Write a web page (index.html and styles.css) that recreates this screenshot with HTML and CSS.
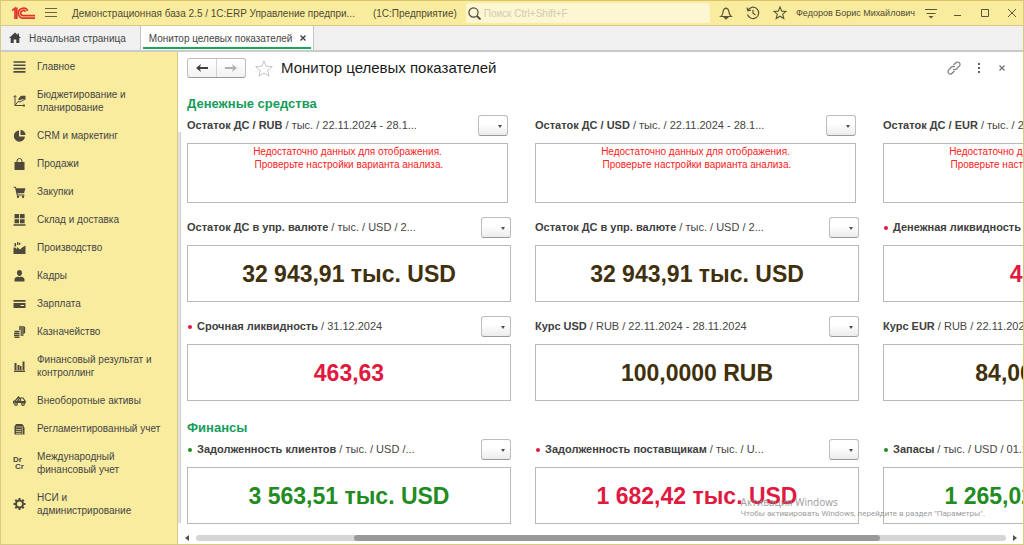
FILE: index.html
```html
<!DOCTYPE html>
<html lang="ru">
<head>
<meta charset="utf-8">
<title>Монитор целевых показателей</title>
<link rel="stylesheet" href="styles.css">
</head>
<body>
<div class="window">
  <header class="titlebar">
    <svg class="logo" viewBox="0 0 24 14" fill="none" stroke="#e0342b" stroke-width="1.700"><path d="M1 4.700 4 2.200V13M5.800 1.500V13"/><path d="M16.800 4.800A5 5 0 1 0 12.500 12.200H24"/><path d="M14.500 5.800A2.600 2.600 0 1 0 12.500 9.700H24"/></svg>
    <button class="icon-btn menu-btn" aria-label="Меню"><svg width="12" height="12" viewBox="0 0 12 12" stroke="#6b6443"><path d="M0 1.500h12M0 5.500h12M0 9.500h12"/></svg></button>
    <span class="app-title">Демонстрационная база 2.5 / 1С:ERP Управление предпри...</span>
    <span class="app-kind">(1С:Предприятие)</span>
    <label class="search">
      <svg width="13" height="13" viewBox="0 0 13 13" fill="none" stroke="#4d4935" stroke-width="1.200"><circle cx="5.500" cy="5.500" r="4.600"/><path d="m9 9 3.500 3.500" stroke-width="1.800"/></svg>
      <input type="search" placeholder="Поиск Ctrl+Shift+F" aria-label="Поиск">
    </label>
    <div class="tools">
      <button class="icon-btn" aria-label="Уведомления"><svg width="14" height="14" viewBox="0 0 14 14" fill="none" stroke="#5a543a" stroke-width="1.200"><path d="M7 1.200v1M1.800 10.500h10.400c-1.500-1-1.900-2-2.200-4.300C9.700 3.500 8.700 2.300 7 2.300S4.300 3.500 4 6.200C3.700 8.500 3.300 9.500 1.800 10.500z"/><path d="M5.500 11.500h3L7 13z" fill="#5a543a"/></svg></button>
      <button class="icon-btn" aria-label="История"><svg width="14" height="14" viewBox="0 0 14 14" fill="none" stroke="#5a543a" stroke-width="1.200"><path d="M1.800 4.500A5.700 5.700 0 1 1 1.500 8.500M1 1.500l.8 3.300L5 4.200M7 3.800v3.500l2.500 1.800"/></svg></button>
      <button class="icon-btn" aria-label="Избранное"><svg width="14" height="14" viewBox="0 0 14 14" fill="none" stroke="#5a543a" stroke-width="1.100"><path d="m7 1 1.700 4.100 4.400.3-3.400 2.800 1.100 4.300L7 10.200l-3.800 2.300 1.100-4.300L.9 5.400l4.400-.3z"/></svg></button>
      <a class="user" href="#">Федоров Борис Михайлович</a>
      <button class="icon-btn" aria-label="Настройки панели"><svg width="12" height="12" viewBox="0 0 12 12" stroke="#5a543a"><path d="M0 2.500h12M1.500 6.500h9"/><path d="M3.500 9h5L6 11.500z" fill="#5a543a" stroke="none"/></svg></button>
    </div>
    <div class="win-controls">
      <button class="icon-btn" aria-label="Свернуть"><svg width="8" height="8" viewBox="0 0 8 8" stroke="#5a543a"><path d="M0 6.500h7"/></svg></button>
      <button class="icon-btn" aria-label="Развернуть"><svg width="8" height="8" viewBox="0 0 8 8" fill="none" stroke="#5a543a"><path d="M.5.5h7v7h-7z"/></svg></button>
      <button class="icon-btn" aria-label="Закрыть"><svg width="8" height="8" viewBox="0 0 8 8" stroke="#5a543a"><path d="m0 0 8 8M8 0 0 8"/></svg></button>
    </div>
  </header>

  <nav class="tabs" aria-label="Открытые окна">
    <a class="tab" href="#"><svg width="12" height="12" viewBox="0 0 12 12" fill="#404040"><path d="M6 .5 0 6h1.700v5h3V7.500h2.600V11h3V6H12L10 4.200V1.500H8.600v1.400z"/></svg>Начальная страница</a>
    <div class="tab tab-active"><a href="#">Монитор целевых показателей</a><button class="icon-btn" aria-label="Закрыть вкладку"><svg width="6" height="6" viewBox="0 0 6 6" stroke="#404040" stroke-width="1.400"><path d="m.5.5 5 5M5.500.5l-5 5"/></svg></button></div>
  </nav>

  <div class="body">
    <nav class="sidebar" aria-label="Разделы">
      <a href="#"><svg viewBox="0 0 12 12" stroke="#4d4a3c" stroke-width="1.600"><path d="M0 1h12M0 4.300h12M0 7.600h12M0 10.900h12"/></svg>Главное</a>
      <a href="#"><svg viewBox="0 0 12 12" fill="none" stroke="#4d4a3c"><path d="M1.500 1v9.500H11M0 2.200 1.500.5 3 2.200M9.800 9l1.700 1.500L9.800 12M1.500 10.500l3-4 2 .5L12 4"/><path d="M5 3.500 7.500.8H12v3L8 4.500l-3 1z" fill="#4d4a3c" stroke="none"/></svg><span>Бюджетирование и<br>планирование</span></a>
      <a href="#"><svg viewBox="0 0 12 12" fill="#4d4a3c"><path d="M5.500.5v6h6A5.600 5.600 0 1 1 5.500.5z"/><path d="M7 0a5 5 0 0 1 5 5H7z"/></svg>CRM и маркетинг</a>
      <a href="#"><svg viewBox="0 0 12 12" fill="#4d4a3c"><path d="M1 4h10v8H1z"/><path d="M3.500 5.500V3a2.500 2.500 0 0 1 5 0v2.500" fill="none" stroke="#4d4a3c"/></svg>Продажи</a>
      <a href="#"><svg viewBox="0 0 12 12" fill="#4d4a3c"><path d="M0 .7h2.300l.6 1.500H12l-1.500 5H4l.3 1.200H11v1H3.300L1.600 1.800H0z"/><circle cx="4.500" cy="10.700" r="1.200"/><circle cx="9.500" cy="10.700" r="1.200"/></svg>Закупки</a>
      <a href="#"><svg viewBox="0 0 12 12" fill="#4d4a3c"><path d="M1 0h4.600v4.300H1zM6.500 0h4.600v4.300H6.500zM1 5.200h4.600v4H1zM6.500 5.200h4.600v4H6.500zM0 10.200h12v1.500H0z"/></svg>Склад и доставка</a>
      <a href="#"><svg viewBox="0 0 12 12" fill="#4d4a3c"><path d="M0 12V5.500h1.500L3.500 7V5l3 2.500L9 5.300l3-1.800V12z"/><path d="M1 1h1.600v3.500H1zM3.600 0h1.200v3H3.600zM5.300.8h1.500v2H5.300z"/></svg>Производство</a>
      <a href="#"><svg viewBox="0 0 12 12" fill="#4d4a3c"><path d="M3.500 2.500C3.500 1 4.500 0 6 0s2.500 1 2.500 2.500C8.500 4.500 7.500 6 6 6S3.500 4.500 3.500 2.500zM1 11.500V9.500C1 7.500 3 7 4.500 6.500L6 7.300l1.500-.8C9 7 11 7.500 11 9.500v2z"/></svg>Кадры</a>
      <a href="#"><svg viewBox="0 0 12 12" fill="#4d4a3c"><path d="M0 2h12v1.800H0zM0 5h12v5H0z"/><path d="M7 7.500h3.500" stroke="#faec9f"/></svg>Зарплата</a>
      <a href="#"><svg viewBox="0 0 12 12" fill="none" stroke="#4d4a3c" stroke-width="1.300"><path d="M5.500 1h5.500M5.500 3h5.500M7 5h4.500M7 7h4M7 9h3M1 5.500h5M.5 7.500H6M.5 9.500H6M1 11.400h5M11 1v6"/></svg>Казначейство</a>
      <a href="#"><svg viewBox="0 0 12 12" fill="#4d4a3c"><path d="M1 3h2v7H1zM4 5h2v5H4zM6.500 6h1.500v4H6.500zM9 1.500h2V10H9zM.5 10.500h11V12H.5z"/></svg><span>Финансовый результат и<br>контроллинг</span></a>
      <a href="#"><svg viewBox="0 0 12 12" fill="none" stroke="#4d4a3c" stroke-width="1.200"><path d="M0 8.500V6.500l2-1 3-3.500 1 1-2 3h3M7 8V3h2.500l2 3v2.500"/><path d="M1 7h11" stroke-width="2"/><circle cx="2.500" cy="9" r="1.300"/><circle cx="9.500" cy="9" r="1.300"/></svg>Внеоборотные активы</a>
      <a href="#"><svg viewBox="0 0 12 12" fill="#4d4a3c"><path d="M1 3.500 2.500 1h6L10 2.500l1 2.500v6.500H1z"/><path d="M2.500 4h5M2.500 6.500h5M2.500 8.500h5M2.500 10.300h5M8.700 3v8.500" stroke="#faec9f" stroke-width=".7"/></svg>Регламентированный учет</a>
      <a href="#"><span class="drcr" aria-hidden="true"><b>Dr</b><b>Cr</b></span><span>Международный<br>финансовый учет</span></a>
      <a href="#"><svg viewBox="0 0 12 12" fill="none" stroke="#4d4a3c"><circle cx="6" cy="6" r="3.500" stroke-width="2"/><path d="M6 0v2M6 10v2M0 6h2M10 6h2M1.800 1.800l1.400 1.400M8.800 8.800l1.400 1.400M10.200 1.800 8.800 3.200M3.200 8.800l-1.400 1.400" stroke-width="2"/></svg><span>НСИ и<br>администрирование</span></a>
    </nav>

    <main class="main">
      <div class="page-head">
        <div class="nav-buttons">
          <button aria-label="Назад"><svg width="12" height="8" viewBox="0 0 12 8" fill="#404040"><path d="M5 0 0 4l5 4-1-3h8V3H4z"/></svg></button>
          <button aria-label="Вперед" disabled><svg width="12" height="8" viewBox="0 0 12 8" fill="#b0b0b0"><path d="m7 0 5 4-5 4 1-3H0V3h8z"/></svg></button>
        </div>
        <button class="icon-btn star" aria-label="В избранное"><svg width="18" height="17" viewBox="0 0 18 17" fill="#fff" stroke="#c4c4c4"><path d="m9 .8 2.100 5.400 6.200.4-4.700 3.700 1.500 5.900L9 12.900l-5.100 3.300 1.500-5.900L.7 6.600l6.200-.4z"/></svg></button>
        <h1>Монитор целевых показателей</h1>
        <div class="page-tools">
          <button class="icon-btn" aria-label="Ссылка"><svg width="14" height="14" viewBox="0 0 14 14" fill="none" stroke="#7c7c7c" stroke-width="1.200"><path d="m6.500 4 2.400-2.300a2.300 2.300 0 0 1 3.400 3.400L9.500 8a2.300 2.300 0 0 1-3.300-.1M7.500 10l-2.400 2.300a2.300 2.300 0 0 1-3.400-3.400L4.500 6a2.300 2.300 0 0 1 3.300.1"/></svg></button>
          <button class="icon-btn" aria-label="Еще"><svg width="4" height="10" viewBox="0 0 4 10" fill="#606060"><path d="M1 0h2v2H1zM1 4h2v2H1zM1 8h2v2H1z"/></svg></button>
          <button class="icon-btn" aria-label="Закрыть"><svg width="6" height="6" viewBox="0 0 6 6" stroke="#707070" stroke-width="1.200"><path d="m.5.5 5 5M5.500.5l-5 5"/></svg></button>
        </div>
      </div>

      <div class="board">
        <section>
          <h2>Денежные средства</h2>
          <div class="cards">
            <article class="card card-empty"><div class="card-head"><p><b>Остаток ДС / RUB</b> / тыс. / 22.11.2024 - 28.1...</p><button class="drop" aria-label="Действия"></button></div><div class="box">Недостаточно данных для отображения.<br>&nbsp;Проверьте настройки варианта анализа.</div></article>
            <article class="card card-empty"><div class="card-head"><p><b>Остаток ДС / USD</b> / тыс. / 22.11.2024 - 28.1...</p><button class="drop" aria-label="Действия"></button></div><div class="box">Недостаточно данных для отображения.<br>&nbsp;Проверьте настройки варианта анализа.</div></article>
            <article class="card card-empty"><div class="card-head"><p><b>Остаток ДС / EUR</b> / тыс. / 22.11.2024 - 28.1...</p><button class="drop" aria-label="Действия"></button></div><div class="box">Недостаточно данных для отображения.<br>&nbsp;Проверьте настройки варианта анализа.</div></article>
            <article class="card"><div class="card-head"><p><b>Остаток ДС в упр. валюте</b> / тыс. / USD / 2...</p><button class="drop" aria-label="Действия"></button></div><div class="box">32 943,91 тыс. USD</div></article>
            <article class="card"><div class="card-head"><p><b>Остаток ДС в упр. валюте</b> / тыс. / USD / 2...</p><button class="drop" aria-label="Действия"></button></div><div class="box">32 943,91 тыс. USD</div></article>
            <article class="card bad"><div class="card-head"><p><b>Денежная ликвидность</b> / 31.12.2024</p><button class="drop" aria-label="Действия"></button></div><div class="box">463,63</div></article>
            <article class="card bad"><div class="card-head"><p><b>Срочная ликвидность</b> / 31.12.2024</p><button class="drop" aria-label="Действия"></button></div><div class="box">463,63</div></article>
            <article class="card"><div class="card-head"><p><b>Курс USD</b> / RUB / 22.11.2024 - 28.11.2024</p><button class="drop" aria-label="Действия"></button></div><div class="box">100,0000 RUB</div></article>
            <article class="card"><div class="card-head"><p><b>Курс EUR</b> / RUB / 22.11.2024 - 28.11.2024</p><button class="drop" aria-label="Действия"></button></div><div class="box">84,0000 RUB</div></article>
          </div>
        </section>
        <section>
          <h2>Финансы</h2>
          <div class="cards">
            <article class="card good"><div class="card-head"><p><b>Задолженность клиентов</b> / тыс. / USD /...</p><button class="drop" aria-label="Действия"></button></div><div class="box">3 563,51 тыс. USD</div></article>
            <article class="card bad"><div class="card-head"><p><b>Задолженность поставщикам</b> / тыс. / U...</p><button class="drop" aria-label="Действия"></button></div><div class="box">1 682,42 тыс. USD</div></article>
            <article class="card good"><div class="card-head"><p><b>Запасы</b> / тыс. / USD / 01.10.2024</p><button class="drop" aria-label="Действия"></button></div><div class="box">1 265,02 тыс. USD</div></article>
          </div>
        </section>
      </div>

      <div class="scrollbar">
        <button class="icon-btn" aria-label="Прокрутить влево"><svg width="4" height="6" viewBox="0 0 4 6" fill="#505050"><path d="M4 0v6L0 3z"/></svg></button>
        <div class="track"><div class="thumb"></div></div>
        <button class="icon-btn" aria-label="Прокрутить вправо"><svg width="4" height="6" viewBox="0 0 4 6" fill="#505050"><path d="M0 0v6l4-3z"/></svg></button>
      </div>
    </main>
  </div>

  <div class="watermark"><p class="wm-title">Активация Windows</p><p>Чтобы активировать Windows, перейдите в раздел "Параметры".</p></div>
</div>
</body>
</html>
```
FILE: styles.css
```css
* { box-sizing: border-box; margin: 0; padding: 0; }
body { font: 10px/13px "Liberation Sans", Arial, sans-serif; color: #454545; background: #fff; }
a { color: inherit; text-decoration: none; }
button, input { font: inherit; color: inherit; }
svg { display: block; flex: none; }
.icon-btn { display: flex; align-items: center; justify-content: center; border: 0; background: none; flex: none; }

.window { position: relative; display: flex; flex-direction: column; height: 100vh; overflow: hidden; border: 1px solid #d8ca80; border-top: 1px solid #d8c56c; }

.titlebar { display: flex; align-items: center; height: 25px; flex: none; background: #faec9f; border-bottom: 1px solid #d8ca80; padding: 0 7px 0 10px; white-space: nowrap; color: #504a32; }
.logo { width: 24px; height: 14px; }
.menu-btn { margin-left: 10px; }
.app-title { margin-left: 15px; }
.app-kind { margin-left: 18px; }
.search { display: flex; align-items: center; gap: 3px; flex: 1; height: 20px; margin-left: 9px; padding-left: 2px; background: #fdf6d2; border-radius: 3px; }
.search input { flex: 1; min-width: 0; border: 0; outline: 0; background: none; }
.search input::placeholder { color: #d0cbb4; opacity: 1; }
.tools { display: flex; align-items: center; gap: 13px; margin-left: 9px; }
.user { font-size: 9px; margin: 0 -3px 0 -4px; }
.win-controls { display: flex; align-items: center; gap: 19px; margin-left: 17px; }

.tabs { display: flex; height: 26px; flex: none; background: #f0f0f0; border-bottom: 2px solid #cacaca; }
.tab { display: flex; align-items: center; gap: 8px; padding: 0 14px 0 8px; border-right: 1px solid #c4c4c4; white-space: nowrap; }
.tab-active { position: relative; padding: 0 7px 0 8px; background: #fff; }
.tab-active::after { content: ""; position: absolute; left: 2px; right: 2px; bottom: 1px; height: 2px; background: #1aa659; }

.body { display: flex; flex: 1; min-height: 0; }
.sidebar { width: 177px; flex: none; background: #faec9f; border-right: 1px solid #d8ca80; }
.sidebar a { display: flex; align-items: center; gap: 11px; padding: 8px 4px 7px 12px; white-space: nowrap; }
.sidebar svg, .drcr { width: 13px; height: 12px; margin-top: -1px; margin-bottom: -1px; }
.drcr { display: flex; flex-direction: column; justify-content: center; font-size: 8px; line-height: 7px; }
.drcr b + b { padding-left: 2px; }

.main { position: relative; display: flex; flex-direction: column; flex: 1; min-width: 0; background: #fff; }
.main::before { content: ""; position: absolute; left: 0; top: 80px; bottom: 21px; width: 2px; background: #e2e2e2; border-right: 1px solid #cfcfcf; }
.page-head { display: flex; align-items: center; height: 32px; flex: none; padding: 0 18px 0 9px; }
.nav-buttons { display: flex; height: 20px; border: 1px solid #bdbdbd; border-bottom-color: #999; border-radius: 3px; background: linear-gradient(#fff, #f2f2f2); }
.nav-buttons button { width: 28px; display: flex; align-items: center; justify-content: center; border: 0; background: none; }
.nav-buttons button + button { width: 29px; border-left: 1px solid #d2d2d2; }
.star { margin: 0 8px 0 9px; }
h1 { flex: 1; font-size: 15px; line-height: 18px; font-weight: 400; color: #1a1a1a; white-space: nowrap; }
.page-tools { display: flex; align-items: center; gap: 16px; }
.page-tools button:last-child { margin-left: 2px; }

.board { flex: 1; min-height: 0; overflow: hidden; padding: 12px 0 0 9px; }
h2 { font-size: 13px; line-height: 16px; color: #169c5a; margin-bottom: 3px; }
.cards { display: grid; grid-template-columns: repeat(3, 324px); gap: 14px 24px; }
section + section { margin-top: 19px; }
.card-empty { width: 321px; }
.card-head { display: flex; align-items: center; justify-content: space-between; height: 20px; margin-bottom: 8px; font-size: 11px; white-space: nowrap; }
.card-head b { color: #404040; }
.bad p::before, .good p::before { content: ""; display: inline-block; width: 4px; height: 4px; margin: 0 5px 1px 1px; border-radius: 50%; background: #e0193f; }
.good p::before { background: #228b22; }
.drop { position: relative; width: 30px; height: 21px; border: 1px solid #bdbdbd; border-bottom-color: #999; border-radius: 3px; background: linear-gradient(#fff 40%, #ececec); }
.drop::after { content: ""; position: absolute; right: 5px; top: 9px; border: 2px solid transparent; border-top: 3px solid #505050; border-bottom: 0; }
.box { display: flex; align-items: center; justify-content: center; height: 57px; border: 1px solid #b8b8b8; font-size: 23px; line-height: 26px; font-weight: 700; color: #40300c; white-space: nowrap; }
.bad .box { color: #e0193f; }
.good .box { color: #228b22; }
.card-empty .box { display: block; height: 60px; padding-top: 1px; font-size: 10px; line-height: 13px; font-weight: 400; color: #ff2020; text-align: center; }

.scrollbar { display: flex; align-items: center; gap: 7px; height: 13px; flex: none; padding: 0 6px 0 7px; }
.track { flex: 1; height: 6px; border-radius: 3px; background: #d6d6d6; }
.thumb { width: 65%; height: 6px; margin-left: 19.500%; border-radius: 3px; background: #999; }

.watermark { position: absolute; right: 38px; bottom: 24px; font: 8px/12px Roboto, sans-serif; color: #8c8c8c; opacity: .85; white-space: nowrap; }
.wm-title { font-family: "Open Sans", sans-serif; font-size: 10px; }
```
